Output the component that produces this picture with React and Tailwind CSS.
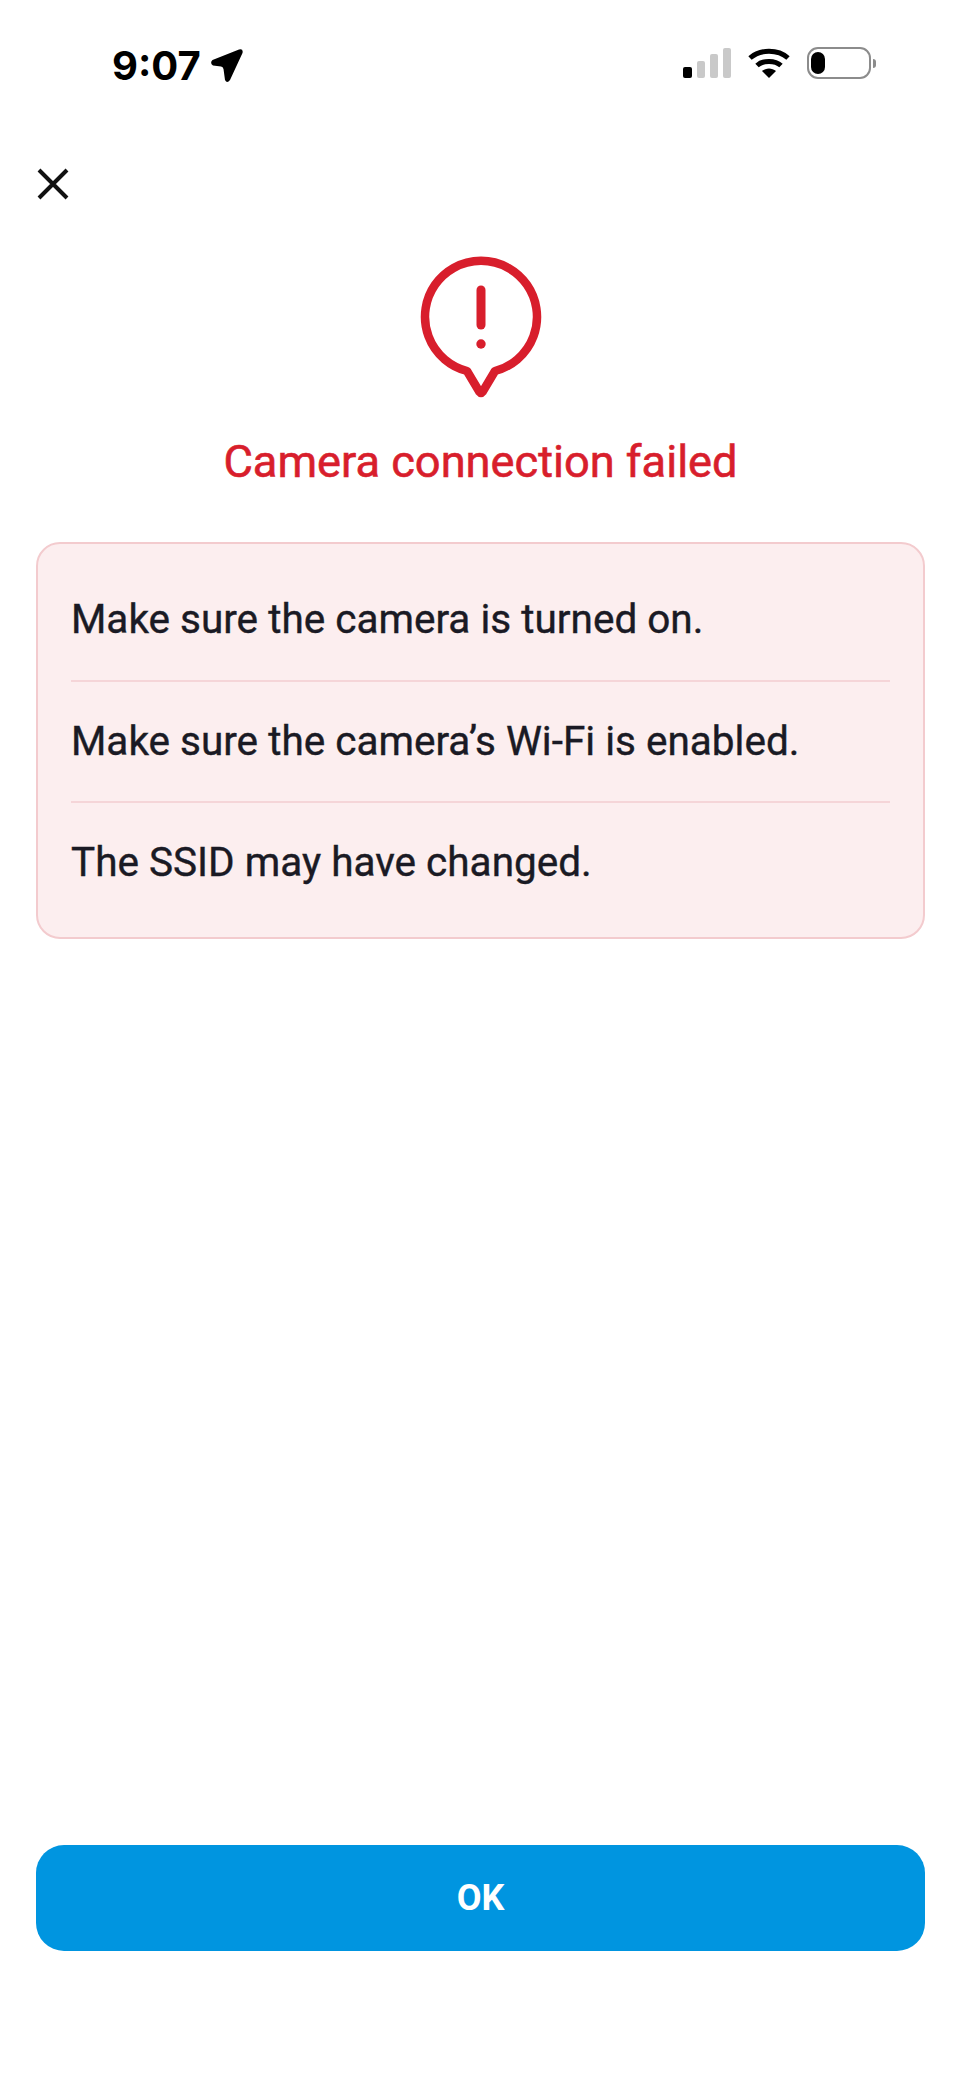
const tips = [
  "Make sure the camera is turned on.",
  "Make sure the camera’s Wi-Fi is enabled.",
  "The SSID may have changed.",
];

const StatusBar = () => (
  <div className="flex h-[130px] shrink-0 items-start justify-between pl-[112px] pr-[85px] pt-[44px]">
    <div className="flex items-center gap-[9px]">
      <span className="font-['Inter',sans-serif] text-[40px] leading-[44px] font-bold text-black">9:07</span>
      <svg width="34" height="36" viewBox="0 0 34 36" fill="#000">
        <path d="M2.5 12 L29 1.5 Q33.5 0.5 32.5 5 L20 32 Q17 36 15 32 L13.5 21 Q13 18.5 11 18.5 L3 17.5 Q-0.5 15 2.5 12 Z" />
      </svg>
    </div>
    <div className="flex items-center gap-[16px] pt-[3px]">
      <div className="flex items-end gap-[5px]">
        <div className="h-[11px] w-[9px] rounded-[2px] bg-black" />
        <div className="h-[17px] w-[8px] rounded-[2px] bg-[#c9c9c9]" />
        <div className="h-[24px] w-[8px] rounded-[2px] bg-[#c9c9c9]" />
        <div className="h-[30px] w-[8px] rounded-[2px] bg-[#c9c9c9]" />
      </div>
      <svg width="44" height="32" viewBox="0 0 44 32" fill="none" stroke="#000" strokeWidth="5">
        <path d="M3 11 C13 2 31 2 41 11" />
        <path d="M10 18.5 C16 13 28 13 34 18.5" />
        <path d="M15 24 L22 31 L29 24 C25 20.5 19 20.5 15 24 Z" fill="#000" stroke="none" />
      </svg>
      <div className="flex items-center gap-[2px]">
        <div className="flex h-[32px] w-[64px] items-center rounded-[11px] border-[2.5px] border-[#8c8c8c] pl-[2px]">
          <div className="h-[22px] w-[14px] rounded-[7px] bg-black" />
        </div>
        <div className="h-[9px] w-[3px] rounded-r-[3px] bg-[#8c8c8c]" />
      </div>
    </div>
  </div>
);

const AlertIcon = () => (
  <svg width="130" height="150" viewBox="415 252 130 150" fill="none" stroke="#d81e2c" strokeWidth="8.5" strokeLinecap="round" strokeLinejoin="round">
    <path d="M466 371 A56 56 0 1 1 494 371 L481.5 392 Q480 394 478.5 392 Z" />
    <path d="M480 290 L480 325" strokeWidth="9" />
    <circle cx="480" cy="344" r="4.7" fill="#d81e2c" stroke="none" />
  </svg>
);

export default function App() {
  return (
    <div className="flex h-[2082px] flex-col bg-white font-['Roboto',sans-serif]">
      <StatusBar />

      <div className="px-[37px] pt-[38px]">
        <svg width="32" height="32" viewBox="0 0 32 32" fill="none" stroke="#111" strokeWidth="4">
          <path d="M2 2 L30 30 M30 2 L2 30" />
        </svg>
      </div>

      <div className="mt-[52px] flex flex-col items-center">
        <AlertIcon />
        <h1 className="mt-[35px] text-[45.2px] leading-[50px] font-normal text-[#d81e2c] [-webkit-text-stroke:0.6px_#d81e2c]">Camera connection failed</h1>
      </div>

      <div className="mx-[36px] mt-[55px] rounded-[24px] border-2 border-[#f3cbce] bg-[#fceeef] px-[33px] py-[15px]">
        {tips.map((tip, i) => (
          <div
            key={tip}
            className={`flex h-[121px] items-center text-[40.5px] font-normal text-[#1a1a24] [-webkit-text-stroke:0.4px_#1a1a24] ${i > 0 ? "border-t-2 border-[#f5d5d8]" : ""}`}
          >
            {tip}
          </div>
        ))}
      </div>

      <div className="mt-auto px-[36px] pb-[131px]">
        <button className="flex h-[106px] w-full items-center justify-center rounded-[28px] bg-[#0095e0] text-[36px] font-bold text-white">
          OK
        </button>
      </div>
    </div>
  );
}
